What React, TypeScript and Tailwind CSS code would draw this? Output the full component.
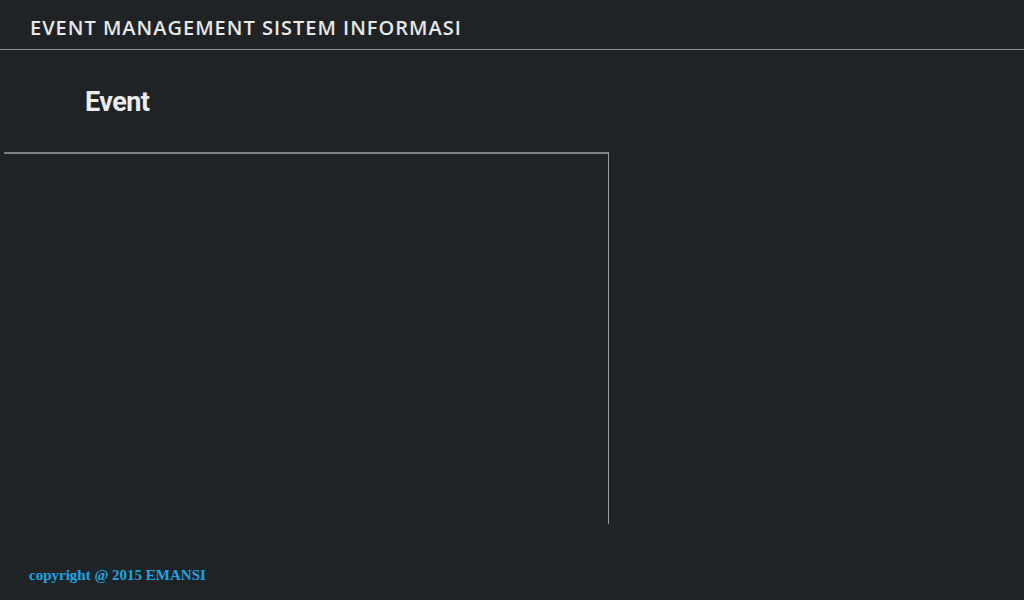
export default function App() {
  return (
    <div className="flex h-[600px] w-[1024px] flex-col overflow-hidden bg-[#1f2326]">
      <header className="h-[50px] border-b border-[#8a8e91] pl-[30px] pt-[16px]">
        <h1
          className="text-[20px] font-semibold leading-[24px] tracking-[1px] text-[#e8e8e8]"
          style={{ fontFamily: '"Open Sans", sans-serif' }}
        >
          EVENT MANAGEMENT SISTEM INFORMASI
        </h1>
      </header>
      <main className="flex-1">
        <h2
          className="pl-[85px] pt-[36px] text-[27px] font-bold leading-[32px] tracking-[-0.6px] text-[#ececec]"
          style={{ fontFamily: 'Roboto, sans-serif' }}
        >
          Event
        </h2>
        <section className="ml-[4px] mt-[34px] h-[372px] w-[605px] border-t-2 border-r border-t-[#7a8288] border-r-[#9a9ea2]" />
      </main>
      <footer className="h-[75px] pl-[29px] pt-[39px]">
        <p
          className="text-[15px] font-bold text-[#1aa6e6]"
          style={{ fontFamily: '"Liberation Serif", serif' }}
        >
          copyright @ 2015 EMANSI
        </p>
      </footer>
    </div>
  );
}
